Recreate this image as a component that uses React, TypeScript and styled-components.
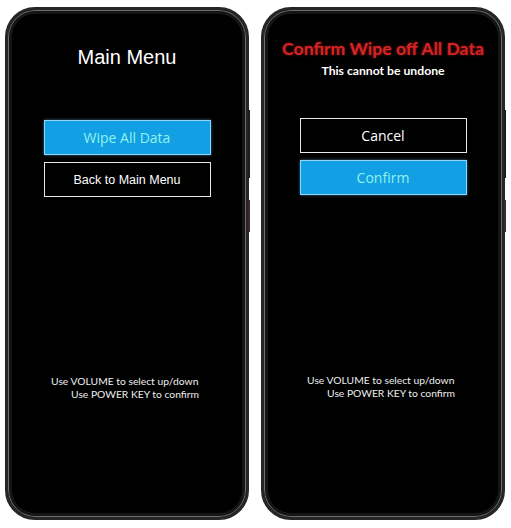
import styled, { createGlobalStyle } from "styled-components";

const GlobalStyle = createGlobalStyle`
  html, body {
    margin: 0;
    padding: 0;
    background: #fff;
  }
`;

const Page = styled.div`
  display: flex;
  gap: 12px;
  padding: 7px 0 0 5px;
`;

const Phone = styled.div`
  position: relative;
  box-sizing: border-box;
  width: 244px;
  height: 513px;
  background: #000;
  border: 3px solid #262626;
  border-radius: 30px;
  box-shadow: inset 0 0 0 1px #6e6e6e, inset 0 0 0 4px #151515;
  display: flex;
  flex-direction: column;
  align-items: center;
`;

const SideKey = styled.div<{ $top: number; $height: number; $tint?: boolean }>`
  position: absolute;
  right: -4px;
  top: ${(p) => p.$top}px;
  width: 2px;
  height: ${(p) => p.$height}px;
  background: ${(p) => (p.$tint ? "#3a2a2e" : "#1e1e1e")};
`;

const Title = styled.h1`
  margin: 35px 0 0;
  font-family: "Liberation Sans", Arial, sans-serif;
  font-weight: normal;
  font-size: 20px;
  line-height: 24px;
  color: #fff;
`;

const AlertTitle = styled.h1`
  margin: 27px 0 0;
  font-family: Lato, "Open Sans", sans-serif;
  font-weight: 700;
  font-size: 17.6px;
  line-height: 24px;
  color: #d42424;
  text-shadow: 0 0 3px rgba(230, 30, 30, 0.6);
`;

const Subtitle = styled.p`
  margin: 2px 0 0;
  font-family: Lato, "Open Sans", sans-serif;
  font-weight: 700;
  font-size: 12.2px;
  line-height: 15px;
  color: #fff;
`;

const Menu = styled.div<{ $top: number }>`
  margin-top: ${(p) => p.$top}px;
  display: flex;
  flex-direction: column;
  align-items: center;
  gap: 7px;
`;

const Option = styled.div<{ $selected?: boolean; $font?: "arial" | "segoe" }>`
  box-sizing: border-box;
  width: 167px;
  height: 35px;
  display: flex;
  align-items: center;
  justify-content: center;
  border: 1px solid ${(p) => (p.$selected ? "#8fd6ff" : "#e8e8e8")};
  background: ${(p) => (p.$selected ? "#139fe3" : "#000")};
  color: ${(p) => (p.$selected ? "#8ff3ee" : "#fff")};
  box-shadow: ${(p) => (p.$selected ? "0 0 3px rgba(120, 200, 255, 0.5)" : "none")};
  font-family: ${(p) =>
    p.$font === "arial"
      ? '"Liberation Sans", Arial, sans-serif'
      : '"Open Sans", "Noto Sans", sans-serif'};
  font-size: ${(p) => (p.$font === "arial" ? "12.5px" : "14px")};
`;

const Hint = styled.div<{ $top: number }>`
  margin-top: ${(p) => p.$top}px;
  padding-right: 4px;
  font-family: Lato, "Open Sans", sans-serif;
  font-size: 10.3px;
  letter-spacing: 0;
  line-height: 12.5px;
  color: #eee;
  white-space: pre;
`;

const HintLine = styled.div<{ $indent?: number }>`
  padding-left: ${(p) => p.$indent ?? 0}px;
`;

function Keys() {
  return (
    <>
      <SideKey $top={100} $height={68} />
      <SideKey $top={190} $height={32} $tint />
    </>
  );
}

export default function App() {
  return (
    <>
      <GlobalStyle />
      <Page>
        <Phone>
          <Keys />
          <Title>Main Menu</Title>
          <Menu $top={51}>
            <Option $selected>Wipe All Data</Option>
            <Option $font="arial">Back to Main Menu</Option>
          </Menu>
          <Hint $top={178}>
            <HintLine>Use VOLUME to select up/down</HintLine>
            <HintLine $indent={20}>Use POWER KEY to confirm</HintLine>
          </Hint>
        </Phone>
        <Phone>
          <Keys />
          <AlertTitle>Confirm Wipe off All Data</AlertTitle>
          <Subtitle>This cannot be undone</Subtitle>
          <Menu $top={40}>
            <Option>Cancel</Option>
            <Option $selected>Confirm</Option>
          </Menu>
          <Hint $top={179}>
            <HintLine>Use VOLUME to select up/down</HintLine>
            <HintLine $indent={20}>Use POWER KEY to confirm</HintLine>
          </Hint>
        </Phone>
      </Page>
    </>
  );
}
